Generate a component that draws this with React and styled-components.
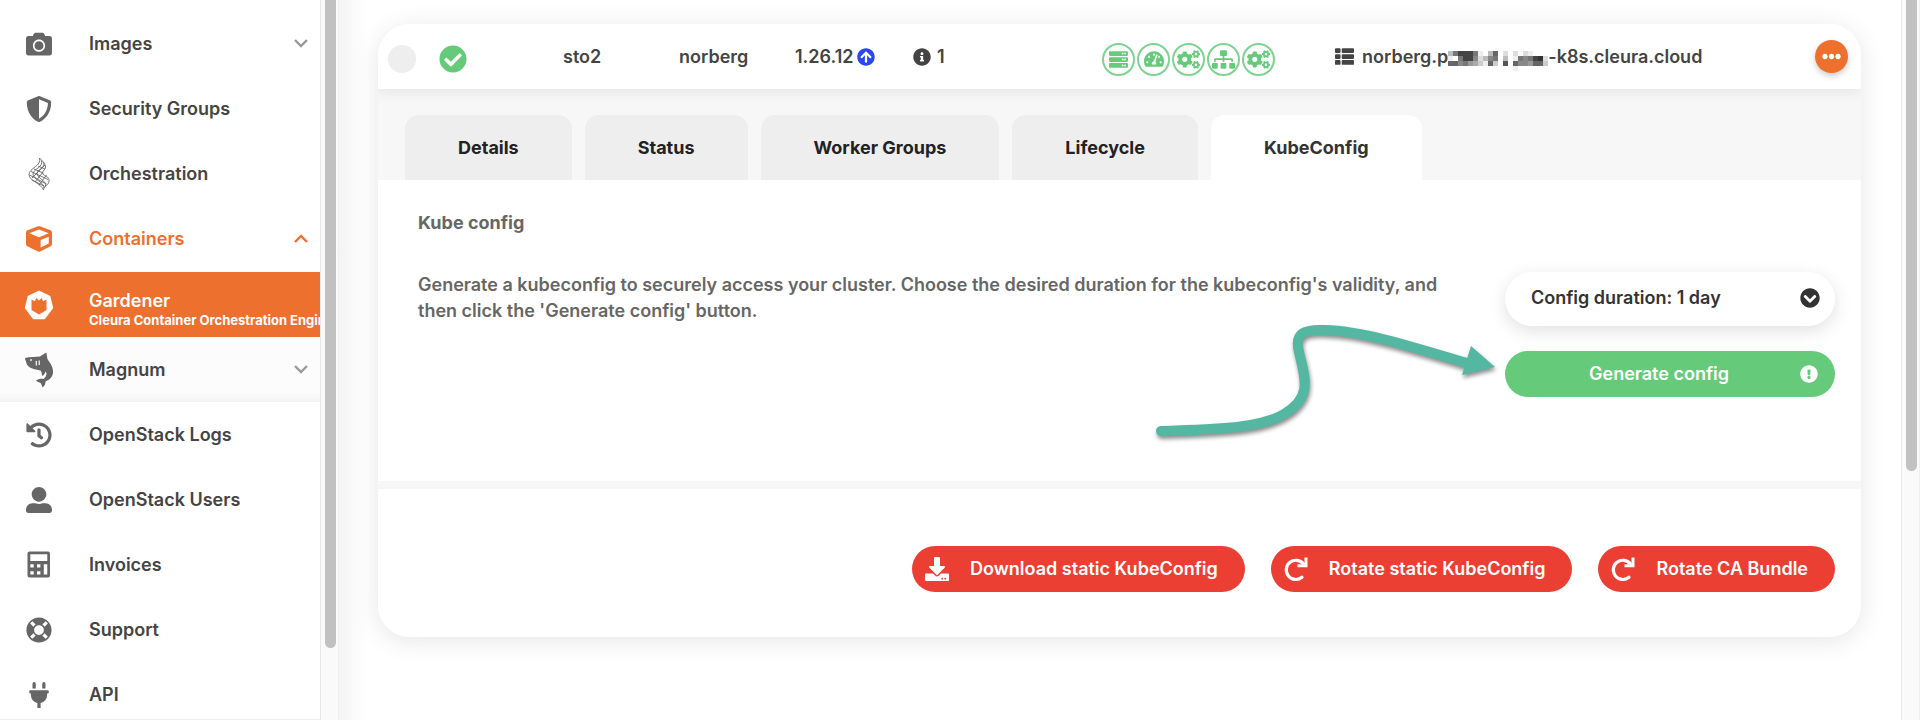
import React from "react";
import styled, { createGlobalStyle, css } from "styled-components";
import {
  FaCamera, FaShieldAlt, FaCube, FaHistory, FaUserAlt, FaLifeRing, FaPlug,
  FaServer, FaTachometerAlt, FaCogs, FaSitemap, FaThList, FaEllipsisH,
  FaCheckCircle, FaArrowCircleUp, FaInfoCircle, FaExclamationCircle,
  FaChevronCircleDown, FaDownload,
} from "react-icons/fa";

const GlobalStyle = createGlobalStyle`
  * { box-sizing: border-box; }
  body {
    margin: 0;
    background: #fff;
    color: #444;
    font: 600 18px/26px Inter, "Liberation Sans", sans-serif;
    overflow: hidden;
  }
  button, select { font: inherit; color: inherit; border: 0; margin: 0; }
  button { cursor: pointer; }
  svg { display: block; flex: none; }
`;

const Page = styled.div`
  display: flex;
  height: 100vh;
`;

/* ---------- Sidebar ---------- */

const Sidebar = styled.nav`
  flex: none;
  width: 320px;
  padding-top: 11px;
  overflow: hidden;
  border-bottom: 1px solid #eee;
`;

const Submenu = styled.div`
  background: #fcfcfc;
  padding-top: 1px;
  box-shadow: inset 0 -8px 10px -6px #eee;
`;

const NavLink = styled.a`
  display: grid;
  grid-template-columns: 28px minmax(0, 1fr) 14px;
  column-gap: 24px;
  align-items: center;
  height: 65px;
  padding: 0 12px 0 25px;
  color: ${(p) => (p.$tone === "open" ? "#ee702e" : p.$tone === "active" ? "#fff" : "#444")};
  background: ${(p) => (p.$tone === "active" ? "#ee702e" : "transparent")};
  text-decoration: none;
  white-space: nowrap;
`;

const NavIcon = styled.span`
  display: flex;
  align-items: center;
  justify-content: center;
  width: 28px;
  color: ${(p) => (p.$tone ? "inherit" : "#666")};
`;

const NavLabel = styled.span`
  padding-left: 12px;
  ${(p) => p.$stacked && css`line-height: 20px; padding-top: 10px;`}
`;

const NavNote = styled.small`
  display: block;
  font-size: 13px;
  font-weight: 700;
  line-height: 18px;
`;

const ScrollTrack = styled.div`
  flex: none;
  width: 19px;
  padding: 0 2px 0 4px;
  background: #fafafa;
  border-left: 1px solid #e8e8e8;
  border-right: 1px solid #f0f0f0;
`;

const ScrollThumb = styled.div`
  width: 11px;
  height: ${(p) => p.$length};
  border-radius: 0 0 6px 6px;
  background: #c1c1c1;
`;

/* ---------- Cluster card ---------- */

const Main = styled.main`
  flex: 1;
  min-width: 0;
  padding: 24px 40px 24px 39px;
  background: linear-gradient(to right, #f4f4f4, #fff 28px);
`;

const Card = styled.article`
  border-radius: 32px;
  background: #fff;
  overflow: hidden;
`;

const CardShadow = styled.div`
  border-radius: 32px;
  box-shadow: 0 4px 26px rgba(0, 0, 0, 0.1);
`;

const ClusterRow = styled.header`
  position: relative;
  display: grid;
  grid-template-columns: 51px 124fr 116fr 116fr 118fr 189fr 233fr 480fr 33px;
  align-items: center;
  height: 65px;
  padding: 0 13px 0 10px;
  background: #fff;
  box-shadow: 0 4px 12px rgba(0, 0, 0, 0.07);
  white-space: nowrap;
`;

const Cell = styled.div`
  display: flex;
  align-items: center;
  gap: ${(p) => p.$gap || "8px"};
  padding-top: ${(p) => (p.$lowered ? "5px" : "0")};
`;

const SelectDot = styled.input`
  appearance: none;
  width: 28px;
  height: 28px;
  margin: 4px 0 0;
  border-radius: 50%;
  background: #eee;
`;

const StatusRing = styled.span`
  display: grid;
  place-items: center;
  width: 33px;
  height: 33px;
  border: 2px solid #7dd490;
  border-radius: 50%;
  color: #65cb7b;
`;

const Endpoint = styled.span`
  display: flex;
  align-items: center;
`;

const MoreButton = styled.button`
  display: grid;
  place-items: center;
  width: 33px;
  height: 33px;
  padding: 0;
  border-radius: 50%;
  background: #ee702e;
  color: #fff;
  box-shadow: 0 3px 6px rgba(0, 0, 0, 0.2);
`;

const TabBar = styled.div`
  display: flex;
  gap: 13px;
  padding: 26px 27px 0;
  background: #f7f7f7;
`;

const Tab = styled.button`
  height: 65px;
  padding: 0 53px;
  border-radius: 14px 14px 0 0;
  font-weight: 700;
  background: ${(p) => (p.$active ? "#fff" : "#eee")};
  color: ${(p) => (p.$active ? "#333" : "#222")};
`;

const Panel = styled.section`
  padding: 30px 26px 84px 40px;
  border-bottom: 8px solid #f7f7f7;
  color: #666;
`;

const PanelTitle = styled.h2`
  margin: 0 0 36px;
  font: inherit;
  font-weight: 700;
`;

const PanelBody = styled.div`
  display: flex;
  justify-content: space-between;
  align-items: flex-start;
`;

const Lead = styled.p`
  margin: 0;
  max-width: 1040px;
`;

const Controls = styled.div`
  position: relative;
  flex: none;
  display: grid;
  gap: 25px;
  width: 330px;
`;

const DurationField = styled.label`
  position: relative;
  display: block;
`;

const DurationSelect = styled.select`
  appearance: none;
  width: 100%;
  height: 54px;
  padding: 0 50px 2px 26px;
  border-radius: 27px;
  background: #fff;
  color: #333;
  box-shadow: 0 5px 18px rgba(0, 0, 0, 0.12);
`;

const DurationCaret = styled.span`
  position: absolute;
  top: 16px;
  right: 15px;
  color: #333;
  pointer-events: none;
`;

const GenerateButton = styled.button`
  display: grid;
  grid-template-columns: 1fr 18px;
  align-items: center;
  height: 46px;
  padding: 0 17px 0 13px;
  border-radius: 23px;
  background: #65cb7b;
  color: #fff;
`;

const Pointer = styled.svg`
  position: absolute;
  right: 100%;
  top: 43px;
  pointer-events: none;
  filter: drop-shadow(1px 3px 2px rgba(0, 0, 0, 0.45));
`;

const Actions = styled.footer`
  display: flex;
  justify-content: flex-end;
  gap: 26px;
  padding: 57px 26px 45px;
`;

const DangerButton = styled.button`
  display: flex;
  align-items: center;
  gap: 21px;
  height: 46px;
  padding: 0 27px 0 13px;
  border-radius: 23px;
  background: #eb3f34;
  color: #fff;
`;

/* ---------- Drawings ---------- */

const Chevron = ({ up }) => (
  <svg width="14" height="9" viewBox="0 0 14 9" fill="none" stroke={up ? "#ee702e" : "#999"} strokeWidth="2.4" aria-hidden="true">
    <path d={up ? "M1 8l6-6 6 6" : "M1 1l6 6 6-6"} />
  </svg>
);

const FlameMesh = () => (
  <svg width="24" height="34" viewBox="-1 0 24 34" fill="none" stroke="currentColor" strokeWidth=".9" aria-hidden="true">
    <path d="M11.500 1C14 9 1 11 1 17.500S13 26 15.500 33" />
    <path d="M11.500 1C15.500 5 17.500 7 17.500 10S13.500 14 15 17 21.500 19 21 24 16 28 15.500 33" />
    <path d="M13.500 3.500C16 10 5 12 5 17S17 26 16 31" />
    <path d="M15.500 5.500C18 11 9 12 9 16.500S19 24 17.500 29" />
    <path d="M10 9l7 3M6 12l9 4M3 14.500l17 8M1.500 18l17 9M4 23l12 6" />
    <path d="M17 8L4 21M15 15L7 25M18.500 18L11 28" />
  </svg>
);

const Tulip = () => (
  <svg width="30" height="30" viewBox="0 0 30 30" aria-hidden="true">
    <path fill="#fff" d="M15 .5l11.300 5.400L29.200 18l-7.800 10.500a2 2 0 01-1.500.7H10a2 2 0 01-1.500-.7L.8 18 3.700 5.900z" />
    <path fill="#ee702e" d="M7.500 9.500l3.500 1.800 1.300-3.300L15 10.500 17.700 8l1.300 3.300 3.500-1.800v10.500L15 24.500l-7.500-4.500z" />
  </svg>
);

const Shark = () => (
  <svg width="30" height="36" viewBox="0 0 30 36" aria-hidden="true">
    <path fill="currentColor" d="M1 6C6 4.500 12 5 16 4.500 18.500 3 20.500 1 22.500.5c.2 3 .4 5 1.500 7.500 3 4 5.500 8 5 13-.5 4-3.500 7-7.500 8.500 0 2.500-1 4.500-3 6-.6-2-1-3.500-2-4.500-1.500-1-3-1-4.500-2.500 2.500-1.700 5-2 7.500-1.500 2-1.500 3-3.500 3-6l-1-1.500c-.5 2-1.500 3.500-3.500 4.500 0-2-.3-3.800-1.500-5.500C10 17.500 4 16 2.500 11.500 2 9.500 1.300 8 1 6z" />
    <path stroke="#fcfcfc" strokeWidth="1.200" d="M12.300 9v4.500M15.200 8.500v4.500" />
    <circle cx="7" cy="8" r=".9" fill="#fcfcfc" />
  </svg>
);

const Calculator = () => (
  <svg width="24" height="27" viewBox="0 0 24 27" aria-hidden="true">
    <path
      fill="currentColor"
      fillRule="evenodd"
      d="M2.500.5h18.500a2 2 0 012 2v22a2 2 0 01-2 2H2.500a2 2 0 01-2-2v-22a2 2 0 012-2zM3.300 3.300v6.800h17V3.300zM3.300 13.300v3.200h3.400v-3.200zM10 13.300v3.200h3.400v-3.200zM16.800 13.300v10.200h3.500V13.300zM3.300 20.200v3.300h3.400v-3.300zM10 20.200v3.300h3.400v-3.300z"
    />
  </svg>
);

const RotateIcon = () => (
  <svg width="24" height="26" viewBox="0 0 24 26" fill="none" stroke="currentColor" strokeWidth="3.2" aria-hidden="true">
    <path d="M19.500 8A9.600 9.600 0 1018 21.300" strokeLinecap="round" />
    <path d="M22 1.500v8.300h-8.500" strokeWidth="3" />
  </svg>
);

const MOSAIC = [
  "b74447efb6fdfdfdefff",
  "ef7448db87fbfe78743d",
  "66879ace6cf5f688966c",
  "fffffffffffffeffffff",
];

const MosaicDrawing = styled.svg`
  margin-top: 8px;
`;

const Mosaic = () => (
  <MosaicDrawing width="100" height="20" viewBox="0 0 100 20" shapeRendering="crispEdges" role="img" aria-label="redacted">
    {MOSAIC.flatMap((row, y) =>
      [...row].map((shade, x) =>
        shade === "f" ? null : (
          <rect key={`${x}-${y}`} x={x * 5} y={y * 5} width="5" height="5" fill={`#${shade}${shade}${shade}`} />
        )
      )
    )}
  </MosaicDrawing>
);

const PointerArrow = () => (
  <Pointer width="355" height="125" viewBox="1150 315 355 125" aria-hidden="true">
    <path
      d="M1161 431C1215 429 1258 429 1284 414C1313 397 1305 378 1299 352C1294 333 1304 329 1325 330C1363 331 1410 346 1470 364"
      fill="none"
      stroke="#54b7a1"
      strokeWidth="10"
      strokeLinecap="round"
    />
    <path d="M1471 346L1495 367L1462 375z" fill="#54b7a1" />
  </Pointer>
);

/* ---------- Page ---------- */

const NavItem = ({ icon, label, note, tone, chevron }) => (
  <NavLink href="#" $tone={tone}>
    <NavIcon $tone={tone}>{icon}</NavIcon>
    <NavLabel $stacked={Boolean(note)}>
      {label}
      {note && <NavNote>{note}</NavNote>}
    </NavLabel>
    {chevron && <Chevron up={chevron === "up"} />}
  </NavLink>
);

const TABS = ["Details", "Status", "Worker Groups", "Lifecycle", "KubeConfig"];
const CHECKS = [
  ["API server", FaServer, 19],
  ["Control plane", FaTachometerAlt, 20],
  ["Nodes", FaCogs, 23],
  ["Network", FaSitemap, 23],
  ["System components", FaCogs, 23],
];

export default function App() {
  return (
    <>
      <GlobalStyle />
      <Page>
        <Sidebar aria-label="Services">
          <NavItem icon={<FaCamera size={26} />} label="Images" chevron="down" />
          <NavItem icon={<FaShieldAlt size={26} />} label="Security Groups" />
          <NavItem icon={<FlameMesh />} label="Orchestration" />
          <NavItem icon={<FaCube size={26} />} label="Containers" tone="open" chevron="up" />
          <Submenu>
            <NavItem icon={<Tulip />} label="Gardener" note="Cleura Container Orchestration Engine" tone="active" />
            <NavItem icon={<Shark />} label="Magnum" chevron="down" />
          </Submenu>
          <NavItem icon={<FaHistory size={26} />} label="OpenStack Logs" />
          <NavItem icon={<FaUserAlt size={26} />} label="OpenStack Users" />
          <NavItem icon={<Calculator />} label="Invoices" />
          <NavItem icon={<FaLifeRing size={26} />} label="Support" />
          <NavItem icon={<FaPlug size={26} />} label="API" />
        </Sidebar>
        <ScrollTrack aria-hidden="true">
          <ScrollThumb $length="90%" />
        </ScrollTrack>

        <Main>
          <CardShadow>
            <Card>
              <ClusterRow>
                <SelectDot type="checkbox" aria-label="Select cluster" />
                <Cell $lowered><FaCheckCircle size={28} color="#65cb7b" /></Cell>
                <Cell>sto2</Cell>
                <Cell>norberg</Cell>
                <Cell $gap="4px">1.26.12 <FaArrowCircleUp size={18} color="#2b47f5" /></Cell>
                <Cell $gap="6px"><FaInfoCircle size={18} /> 1</Cell>
                <Cell $gap="2px" $lowered>
                  {CHECKS.map(([name, Icon, size]) => (
                    <StatusRing key={name} role="img" aria-label={name}><Icon size={size} /></StatusRing>
                  ))}
                </Cell>
                <Cell>
                  <FaThList size={19} />
                  <Endpoint>norberg.p<Mosaic />-k8s.cleura.cloud</Endpoint>
                </Cell>
                <MoreButton aria-label="More actions"><FaEllipsisH size={19} /></MoreButton>
              </ClusterRow>

              <TabBar role="tablist">
                {TABS.map((name) => (
                  <Tab key={name} role="tab" aria-selected={name === "KubeConfig"} $active={name === "KubeConfig"}>
                    {name}
                  </Tab>
                ))}
              </TabBar>

              <Panel>
                <PanelTitle>Kube config</PanelTitle>
                <PanelBody>
                  <Lead>
                    Generate a kubeconfig to securely access your cluster. Choose the desired duration for the
                    kubeconfig's validity, and then click the 'Generate config' button.
                  </Lead>
                  <Controls>
                    <DurationField>
                      <DurationSelect aria-label="Config duration" defaultValue="1">
                        <option value="1">Config duration: 1 day</option>
                      </DurationSelect>
                      <DurationCaret><FaChevronCircleDown size={20} /></DurationCaret>
                    </DurationField>
                    <GenerateButton>
                      Generate config <FaExclamationCircle size={18} />
                    </GenerateButton>
                    <PointerArrow />
                  </Controls>
                </PanelBody>
              </Panel>

              <Actions>
                <DangerButton><FaDownload size={24} />Download static KubeConfig</DangerButton>
                <DangerButton><RotateIcon />Rotate static KubeConfig</DangerButton>
                <DangerButton><RotateIcon />Rotate CA Bundle</DangerButton>
              </Actions>
            </Card>
          </CardShadow>
        </Main>
        <ScrollTrack aria-hidden="true">
          <ScrollThumb $length="471px" />
        </ScrollTrack>
      </Page>
    </>
  );
}
